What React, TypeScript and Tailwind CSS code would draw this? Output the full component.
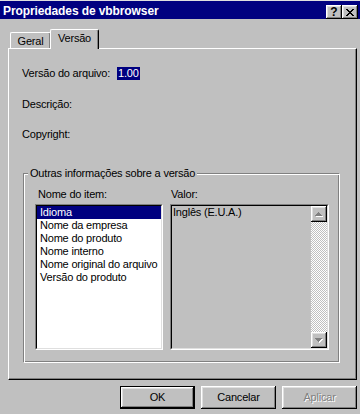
import type { ReactNode } from 'react'

// win95 bevels
const raised =
  'bg-[#c0c0c0] shadow-[inset_-1px_-1px_#000,inset_1px_1px_#fff,inset_-2px_-2px_#808080,inset_2px_2px_#dfdfdf]'

const closeRows = ['11000011', '01100110', '00111100', '00011000', '00111100', '01100110', '11000011']
const upRows = ['0001000', '0011100', '0111110', '1111111']

function Pixels({ rows, color, dx = 0, dy = 0 }: { rows: string[]; color: string; dx?: number; dy?: number }) {
  return (
    <>
      {rows.flatMap((row, y) =>
        row.split('').map((c, x) =>
          c === '1' ? <rect key={`${x}-${y}`} x={x + dx} y={y + dy} width={1} height={1} fill={color} /> : null
        )
      )}
    </>
  )
}

function CaptionButton({ children }: { children: ReactNode }) {
  return <div className={`w-[16px] h-[14px] flex items-center justify-center ${raised}`}>{children}</div>
}

function ScrollArrow({ down }: { down?: boolean }) {
  const rows = down ? [...upRows].reverse() : upRows
  return (
    <div className={`w-[16px] h-[16px] flex items-center justify-center ${raised}`}>
      <svg width="8" height="5" viewBox="0 0 8 5" shapeRendering="crispEdges">
        <Pixels rows={rows} color="#ffffff" dx={1} dy={1} />
        <Pixels rows={rows} color="#808080" />
      </svg>
    </div>
  )
}

function Button({ label, isDefault, disabled }: { label: string; isDefault?: boolean; disabled?: boolean }) {
  return (
    <div
      className={`w-[75px] h-[23px] flex items-center justify-center ${
        isDefault
          ? 'border border-black bg-[#c0c0c0] shadow-[inset_-1px_-1px_#000,inset_1px_1px_#fff,inset_-2px_-2px_#808080,inset_2px_2px_#dfdfdf]'
          : raised
      }`}
    >
      <span className={disabled ? 'text-[#808080] [text-shadow:1px_1px_0_#fff]' : ''}>{label}</span>
    </div>
  )
}

function Sunken({ children, className }: { children: ReactNode; className: string }) {
  return (
    <div className="h-[146px] border border-t-[#808080] border-l-[#808080] border-r-white border-b-white">
      <div className={`h-full border border-t-black border-l-black border-r-[#dfdfdf] border-b-[#dfdfdf] ${className}`}>
        {children}
      </div>
    </div>
  )
}

const items = ['Idioma', 'Nome da empresa', 'Nome do produto', 'Nome interno', 'Nome original do arquivo', 'Versão do produto']

export default function App() {
  return (
    <div className="w-[360px] h-[414px] overflow-hidden bg-[#c0c0c0] text-black text-[11px] leading-[13px] tracking-[-0.2px] whitespace-nowrap font-['Liberation_Sans',Arial,sans-serif]">
      <div className="h-px bg-[#dfdfdf]" />
      <div className="h-[18px] bg-[#000080] flex pl-[3px] pr-[2px]">
        <span className="pt-px text-white font-bold text-[12px] leading-[18px] tracking-[-0.1px]">Propriedades de vbbrowser</span>
        <div className="ml-auto mt-[4px] flex">
          <CaptionButton>
            <span className="font-bold text-[12px] leading-[11px] tracking-normal">?</span>
          </CaptionButton>
          <CaptionButton>
            <svg width="8" height="7" viewBox="0 0 8 7" shapeRendering="crispEdges">
              <Pixels rows={closeRows} color="#000000" />
            </svg>
          </CaptionButton>
        </div>
      </div>

      {/* tabs */}
      <div className="h-[29px] flex items-end pl-[10px]">
        <div className="w-[41px] h-[16px] pt-[2px] flex justify-center rounded-tl-[2px] rounded-tr-[2px] border-l border-t border-r border-l-white border-t-white border-r-black shadow-[inset_-1px_0_#808080]">
          Geral
        </div>
        <div className="relative z-10 -ml-px -mb-px w-[49px] h-[20px] pt-[2px] flex justify-center bg-[#c0c0c0] rounded-tl-[2px] rounded-tr-[2px] border-l border-t border-r border-l-white border-t-white border-r-black shadow-[inset_-1px_0_#808080]">
          Versão
        </div>
      </div>

      {/* tab page */}
      <div className="ml-[8px] w-[349px] h-[332px] border border-t-white border-l-white border-r-black border-b-black shadow-[inset_-1px_-1px_#808080]">
        <div className="ml-[13px] mt-[18px] h-[13px] flex">
          <span className="w-[95px]">Versão do arquivo:</span>
          <span className="px-px bg-[#000080] text-white">1.00</span>
        </div>
        <div className="ml-[13px] mt-[18px] h-[13px]">Descrição:</div>
        <div className="ml-[13px] mt-[17px] h-[13px]">Copyright:</div>

        <div className="relative ml-[14px] mt-[32px] w-[317px] h-[190px] border border-t-[#808080] border-l-[#808080] border-r-white border-b-white shadow-[inset_1px_1px_#fff,inset_-1px_-1px_#808080] pt-[14px] pl-[11px] flex gap-[7px]">
          <span className="absolute left-[4px] top-[-7px] px-[2px] bg-[#c0c0c0]">Outras informações sobre a versão</span>

          <div className="w-[128px]">
            <div className="h-[13px] pl-[3px]">Nome do item:</div>
            <div className="mt-[3px]">
              <Sunken className="bg-white">
                {items.map((it, i) => (
                  <div key={it} className={`h-[13px] pl-[3px] ${i === 0 ? 'bg-[#000080] text-white' : ''}`}>
                    {it}
                  </div>
                ))}
              </Sunken>
            </div>
          </div>

          <div className="w-[159px]">
            <div className="h-[13px] pl-px">Valor:</div>
            <div className="mt-[3px]">
              <Sunken className="bg-[#c0c0c0] flex">
                <div className="flex-1 pl-px">Inglês (E.U.A.)</div>
                <div className="w-[16px] flex flex-col">
                  <ScrollArrow />
                  <div className="flex-1 bg-[image:repeating-conic-gradient(#c0c0c0_0%_25%,#ffffff_0%_50%)] bg-[length:2px_2px]" />
                  <ScrollArrow down />
                </div>
              </Sunken>
            </div>
          </div>
        </div>
      </div>

      <div className="mt-[6px] pr-[3px] flex justify-end gap-[6px]">
        <Button label="OK" isDefault />
        <Button label="Cancelar" />
        <Button label="Aplicar" disabled />
      </div>
    </div>
  )
}
